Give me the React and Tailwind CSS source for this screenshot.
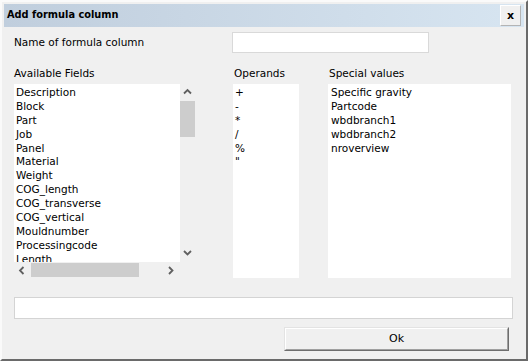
import React from "react";

const font = { fontFamily: '"DejaVu Sans", Verdana, sans-serif' };

function Chev({ dir }) {
  const d = {
    up: "M1 5.5 L4.5 2 L8 5.5",
    down: "M1 2 L4.5 5.5 L8 2",
    left: "M5.5 1 L2 4.5 L5.5 8",
    right: "M2 1 L5.5 4.5 L2 8",
  }[dir];
  return (
    <svg width="9" height="9" viewBox="0 0 9 9" className="block">
      <path d={d} fill="none" stroke="#606060" strokeWidth="1.8" />
    </svg>
  );
}

const fields = [
  "Description",
  "Block",
  "Part",
  "Job",
  "Panel",
  "Material",
  "Weight",
  "COG_length",
  "COG_transverse",
  "COG_vertical",
  "Mouldnumber",
  "Processingcode",
  "Length",
];
const operands = ["+", "-", "*", "/", "%", '"'];
const specials = ["Specific gravity", "Partcode", "wbdbranch1", "wbdbranch2", "nroverview"];

function Items({ items }) {
  return (
    <div className="flex flex-col">
      {items.map((t, i) => (
        <div key={i} className="h-[13.9px] leading-[14px] whitespace-nowrap text-black">
          {t}
        </div>
      ))}
    </div>
  );
}

export default function App() {
  return (
    <div
      className="w-[528px] h-[361px] bg-[#f0f0f0] border-2 border-t-[#fafafa] border-l-[#fafafa] border-r-[#6a6a6a] border-b-[#6a6a6a] p-[2px] flex flex-col text-[10.5px] text-black overflow-hidden"
      style={font}
    >
      {/* Title bar */}
      <div className="h-[23px] flex items-center justify-between bg-gradient-to-r from-[#c0cedd] to-[#d7e5f1] pl-[3px] pr-[3px]">
        <span className="font-bold text-[9.8px] text-black">Add formula column</span>
        <div className="w-[21px] h-[21px] flex items-center justify-center bg-[#f0f0f0] border border-t-[#ffffff] border-l-[#ffffff] border-r-[#b4b4b4] border-b-[#b4b4b4] font-bold text-[11px] leading-none">
          x
        </div>
      </div>

      {/* Body */}
      <div className="flex flex-col pl-[10px]">
        <div className="flex items-center mt-[5px]">
          <div className="w-[218px]">Name of formula column</div>
          <div className="w-[197px] h-[21px] bg-white border border-[#d9d9d9]" />
        </div>

        <div className="flex mt-[13px] h-[14px] leading-[14px]">
          <div className="w-[220px]">Available Fields</div>
          <div className="w-[95px]">Operands</div>
          <div>Special values</div>
        </div>

        <div className="flex mt-[4px] h-[194px]">
          {/* Available fields */}
          <div className="w-[181px] h-[194px] flex flex-col">
            <div className="flex h-[178px]">
              <div className="w-[166px] bg-white overflow-hidden pl-[2px] pt-[1px]">
                <Items items={fields} />
              </div>
              <div className="w-[15px] flex flex-col bg-[#f0f0f0]">
                <div className="h-[17px] flex items-center justify-center">
                  <Chev dir="up" />
                </div>
                <div className="h-[36px] bg-[#cdcdcd]" />
                <div className="flex-1" />
                <div className="h-[17px] flex items-center justify-center">
                  <Chev dir="down" />
                </div>
              </div>
            </div>
            <div className="flex h-[16px]">
              <div className="w-[166px] flex">
                <div className="w-[17px] flex items-center justify-center">
                  <Chev dir="left" />
                </div>
                <div className="w-[108px] my-[1px] bg-[#cdcdcd]" />
                <div className="flex-1" />
                <div className="w-[17px] flex items-center justify-center">
                  <Chev dir="right" />
                </div>
              </div>
              <div className="w-[15px]" />
            </div>
          </div>

          {/* Operands */}
          <div className="ml-[38px] w-[66px] h-[194px] bg-white pl-[2px] pt-[1px]">
            <Items items={operands} />
          </div>

          {/* Special values */}
          <div className="ml-[29px] w-[183px] h-[194px] bg-white pl-[3px] pt-[1px]">
            <Items items={specials} />
          </div>
        </div>

        <div className="mt-[19px] w-[499px] h-[22px] bg-white border border-[#d4d4d4]" />

        <div className="mt-[8px] ml-[270px] w-[225px] h-[24px] border border-t-[#e3e3e3] border-l-[#e3e3e3] border-r-[#6e6e6e] border-b-[#6e6e6e]">
          <div className="w-full h-full border border-t-[#ffffff] border-l-[#ffffff] border-r-[#a0a0a0] border-b-[#a0a0a0] flex items-center justify-center text-[11px]">
            Ok
          </div>
        </div>
      </div>
    </div>
  );
}
